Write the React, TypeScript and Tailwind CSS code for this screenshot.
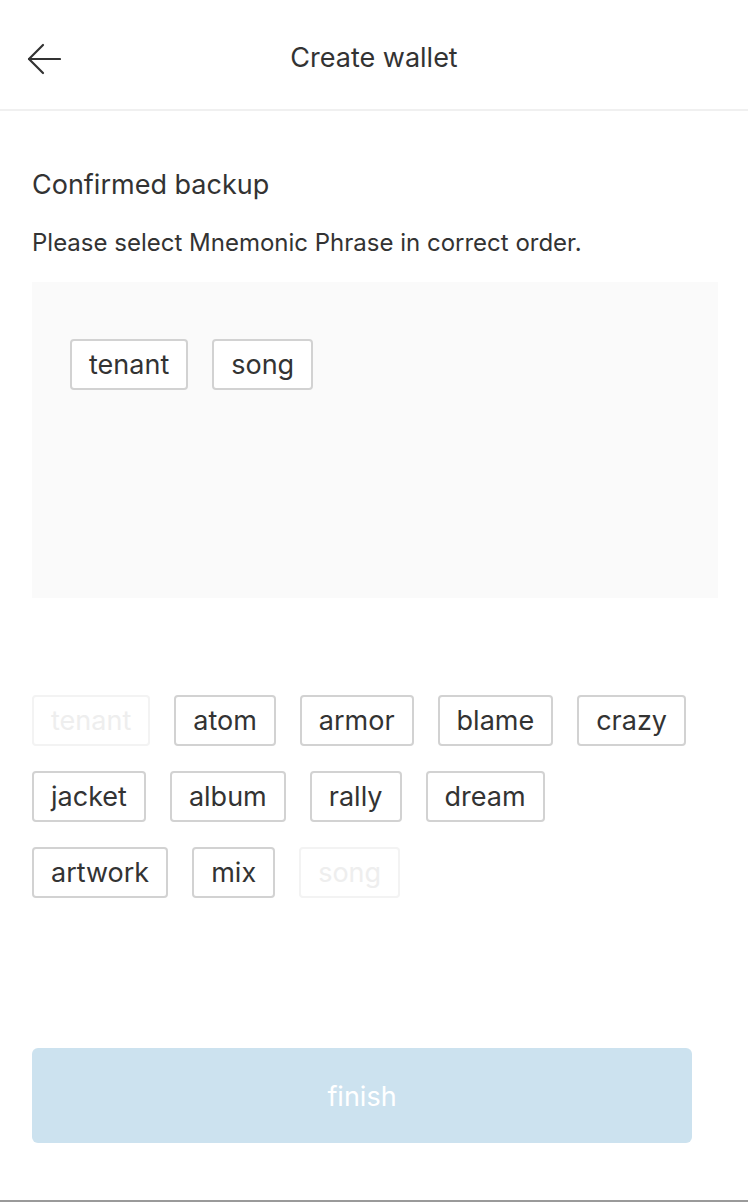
import React from 'react';

const picked = ['tenant', 'song'];

const words = [
  'tenant', 'atom', 'armor', 'blame', 'crazy',
  'jacket', 'album', 'rally', 'dream',
  'artwork', 'mix', 'song',
];

const Chip: React.FC<{ word: string; used?: boolean }> = ({ word, used }) => (
  <div
    className={
      'flex h-[51px] items-center rounded-[4px] border-2 px-[17px] text-[27px] leading-none ' +
      (used ? 'border-[#f3f3f3] text-[#eeeeee]' : 'border-[#d2d2d2] bg-white text-[#333333]')
    }
  >
    {word}
  </div>
);

export default function App() {
  return (
    <div
      className="flex h-[1202px] w-[748px] flex-col bg-white text-[#333333]"
      style={{ fontFamily: 'Inter, "Noto Sans", sans-serif' }}
    >
      <header className="relative flex h-[111px] shrink-0 items-center justify-center border-b-2 border-[#f0f0f0] pt-[5px]">
        <button className="absolute left-[27px] top-[42px] p-0">
          <svg width="34" height="34" viewBox="0 0 34 34" fill="none" stroke="#333" strokeWidth="2.2" strokeLinecap="round" strokeLinejoin="round">
            <path d="M33 17H2" />
            <path d="M16 3L2 17l14 14" />
          </svg>
        </button>
        <h1 className="text-[27px] font-normal leading-none">Create wallet</h1>
      </header>

      <main className="flex flex-1 flex-col px-[32px]">
        <h2 className="mt-[60px] text-[27px] leading-none">Confirmed backup</h2>
        <p className="mt-[33px] text-[24px] leading-none">Please select Mnemonic Phrase in correct order.</p>

        <div className="mt-[27px] h-[316px] w-[686px] bg-[#fafafa] px-[38px] pt-[57px]">
          <div className="flex flex-wrap gap-[24px]">
            {picked.map((w) => (
              <Chip key={w} word={w} />
            ))}
          </div>
        </div>

        <div className="mt-[97px] flex w-[660px] flex-wrap gap-x-[24px] gap-y-[25px]">
          {words.map((w) => (
            <Chip key={w} word={w} used={picked.includes(w)} />
          ))}
        </div>

        <button className="mt-auto mb-[57px] flex h-[95px] w-[660px] items-center justify-center rounded-[6px] bg-[#cce2ef] pt-[3px] text-[27px] text-white">
          finish
        </button>
      </main>
      <div className="h-[2px] shrink-0 bg-[#9a9a9a]" />
    </div>
  );
}
